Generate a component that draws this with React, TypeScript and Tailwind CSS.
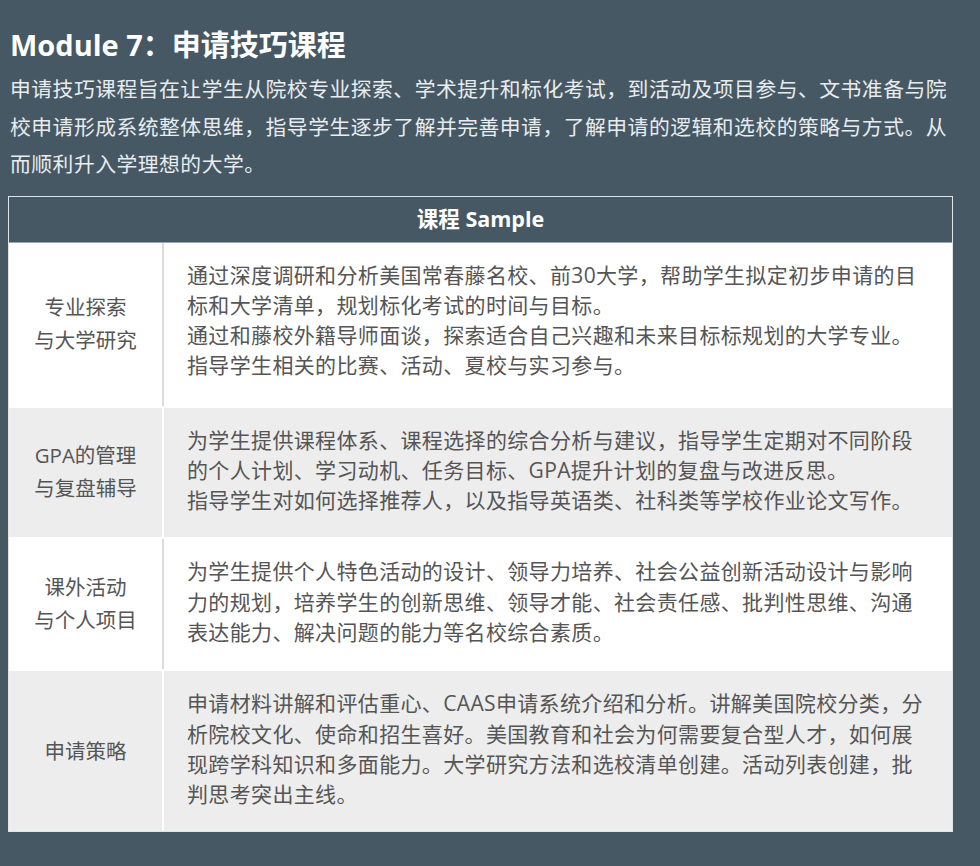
import React from "react";

const rows: { label: string[]; lines: string[]; bg: string; sep: string }[] = [
  {
    label: ["专业探索", "与大学研究"],
    lines: [
      "通过深度调研和分析美国常春藤名校、前30大学，帮助学生拟定初步申请的目",
      "标和大学清单，规划标化考试的时间与目标。",
      "通过和藤校外籍导师面谈，探索适合自己兴趣和未来目标标规划的大学专业。",
      "指导学生相关的比赛、活动、夏校与实习参与。",
    ],
    bg: "bg-white",
    sep: "border-[#dcdcdc]",
  },
  {
    label: ["GPA的管理", "与复盘辅导"],
    lines: [
      "为学生提供课程体系、课程选择的综合分析与建议，指导学生定期对不同阶段",
      "的个人计划、学习动机、任务目标、GPA提升计划的复盘与改进反思。",
      "指导学生对如何选择推荐人，以及指导英语类、社科类等学校作业论文写作。",
    ],
    bg: "bg-[#ededed]",
    sep: "border-white",
  },
  {
    label: ["课外活动", "与个人项目"],
    lines: [
      "为学生提供个人特色活动的设计、领导力培养、社会公益创新活动设计与影响",
      "力的规划，培养学生的创新思维、领导才能、社会责任感、批判性思维、沟通",
      "表达能力、解决问题的能力等名校综合素质。",
    ],
    bg: "bg-white",
    sep: "border-[#dcdcdc]",
  },
  {
    label: ["申请策略"],
    lines: [
      "申请材料讲解和评估重心、CAAS申请系统介绍和分析。讲解美国院校分类，分",
      "析院校文化、使命和招生喜好。美国教育和社会为何需要复合型人才，如何展",
      "现跨学科知识和多面能力。大学研究方法和选校清单创建。活动列表创建，批",
      "判思考突出主线。",
    ],
    bg: "bg-[#ededed]",
    sep: "border-white",
  },
];

export default function App() {
  return (
    <div
      className="w-[980px] h-[866px] bg-[#465864] overflow-hidden"
      style={{ fontFamily: '"Open Sans", "Noto Sans CJK SC", sans-serif' }}
    >
      <div className="pl-[10px] pt-[26px]">
        <h1 className="text-[29px] leading-[38px] font-bold text-white">
          Module 7：申请技巧课程
        </h1>
        <div className="mt-[7px] text-[20.8px] leading-[37.5px] tracking-[0.5px] text-[#e9ecee] whitespace-nowrap">
          <div>申请技巧课程旨在让学生从院校专业探索、学术提升和标化考试，到活动及项目参与、文书准备与院</div>
          <div>校申请形成系统整体思维，指导学生逐步了解并完善申请，了解申请的逻辑和选校的策略与方式。从</div>
          <div>而顺利升入学理想的大学。</div>
        </div>
      </div>
      <div className="ml-[8px] mt-[12px] w-[945px] border border-[#dfe4e7] bg-white">
        <div className="h-[46px] bg-[#465864] flex items-center justify-center text-white font-bold text-[21.5px] border-b border-[#9aa5ad]">
          课程 Sample
        </div>
        {rows.map((r, i) => (
          <div
            key={i}
            className={`flex ${r.bg} ${i > 0 ? "border-t-2 border-white" : ""} ${
              i === 0 ? "min-h-[163px]" : i === 3 ? "min-h-[162px]" : "min-h-[129px]"
            }`}
          >
            <div
              className={`w-[155px] shrink-0 flex flex-col items-center justify-center text-[20.5px] leading-[33px] text-[#555555] border-r-2 ${r.sep}`}
            >
              {r.label.map((l, j) => (
                <div key={j}>{l}</div>
              ))}
            </div>
            <div className="flex-1 pl-[23px] pt-[17px] pb-[22px] text-[21px] leading-[30.3px] tracking-[0.35px] text-[#555555] whitespace-nowrap">
              {r.lines.map((l, j) => (
                <div key={j}>{l}</div>
              ))}
            </div>
          </div>
        ))}
      </div>
    </div>
  );
}
